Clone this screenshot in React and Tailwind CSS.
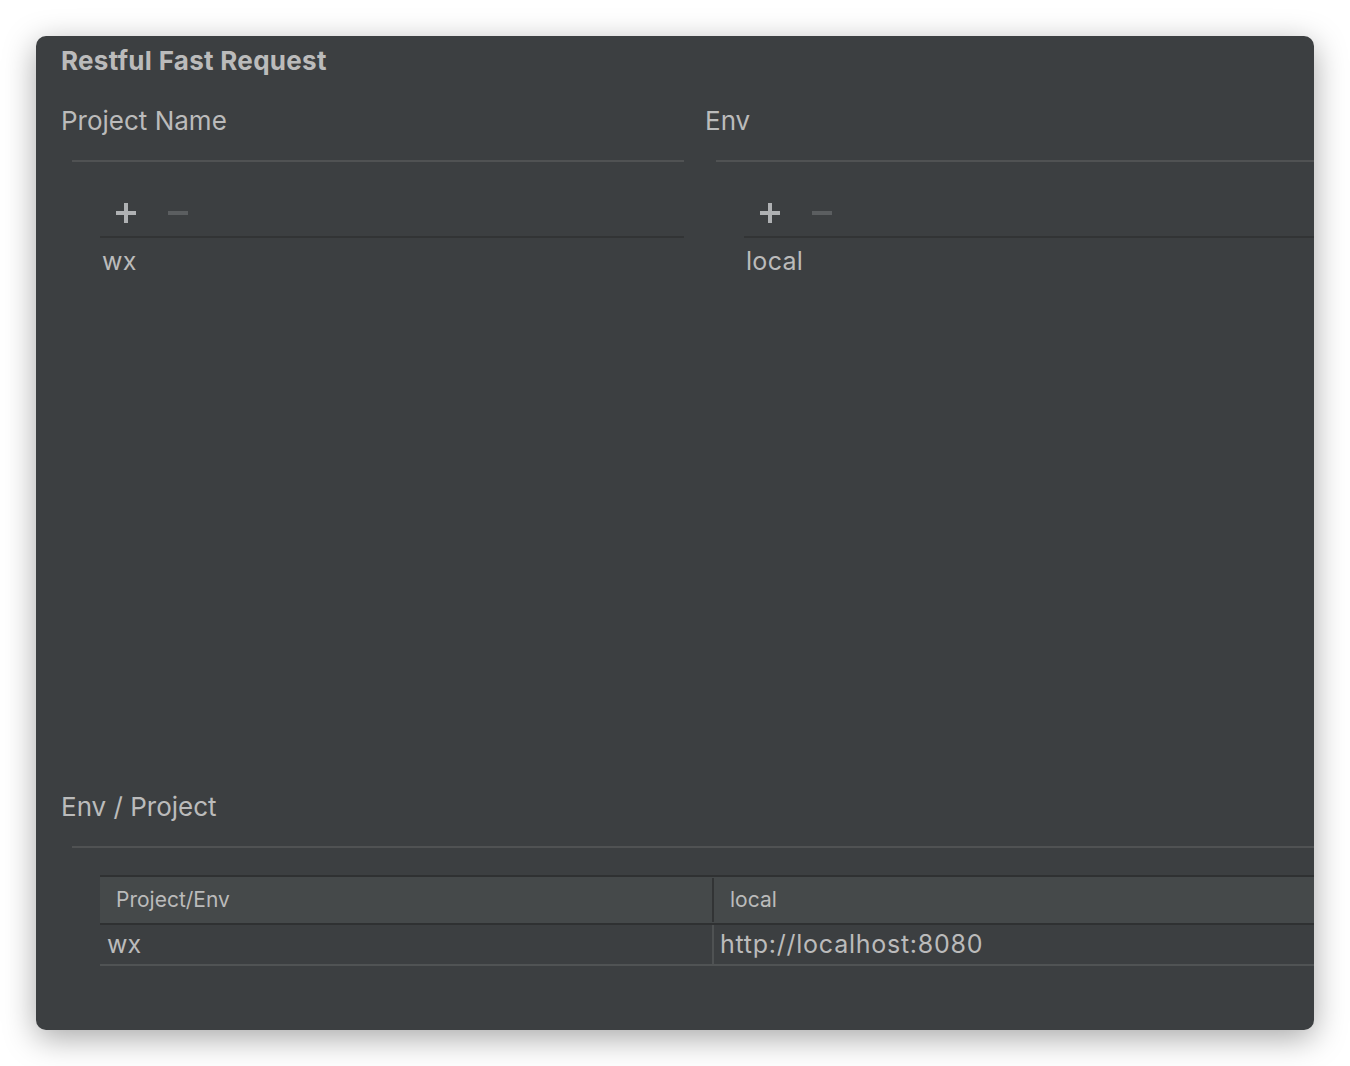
import React from 'react';

const PlusIcon = () => (
    <svg width="20" height="20" viewBox="0 0 20 20">
        <rect x="0" y="8" width="20" height="4" fill="#afb1b3" />
        <rect x="8" y="0" width="4" height="20" fill="#afb1b3" />
    </svg>
);

const MinusIcon = () => (
    <svg width="20" height="20" viewBox="0 0 20 20">
        <rect x="0" y="8" width="20" height="4" fill="#5b5e60" />
    </svg>
);

const ListPanel = ({ label, items }) => (
    <div className="flex flex-col min-w-0">
        <div className="leading-[32px] text-[26px] text-[#bbbbbb]">{label}</div>
        <div className="ml-[11px] mt-[23px] h-[2px] bg-[#505253]" />
        <div className="ml-[39px] mt-[28px] flex flex-col">
            <div className="h-[48px] flex items-center gap-[32px] pl-[16px] border-b-2 border-[#323435]">
                <PlusIcon />
                <MinusIcon />
            </div>
            {items.map((item) => (
                <div key={item} className="h-[48px] flex items-center pl-[2px] text-[25px] tracking-[0.3px] text-[#bbbbbb]">
                    {item}
                </div>
            ))}
        </div>
    </div>
);

export default function App() {
    return (
        <div className="h-[1066px] overflow-hidden bg-white pt-[36px] pl-[36px] font-['Inter','Noto_Sans',sans-serif]">
            <div className="w-[1278px] h-[994px] bg-[#3c3f41] rounded-[10px] overflow-hidden shadow-[0_8px_32px_rgba(0,0,0,0.35)] pl-[25px] pt-[9px] flex flex-col">
                <div className="leading-[32px] text-[26px] tracking-[0.3px] font-bold text-[#bbbbbb]">Restful Fast Request</div>

                {/* project / env lists */}
                <div className="mt-[28px] h-[686px] grid grid-cols-[623px_1fr] gap-x-[21px]">
                    <ListPanel label="Project Name" items={['wx']} />
                    <ListPanel label="Env" items={['local']} />
                </div>

                {/* env / project table */}
                <div className="flex flex-col">
                    <div className="leading-[32px] text-[26px] text-[#bbbbbb]">Env / Project</div>
                    <div className="ml-[11px] mt-[23px] h-[2px] bg-[#505253]" />
                    <div className="ml-[39px] mt-[27px] flex flex-col">
                        <div className="grid grid-cols-[612px_1fr] h-[50px] bg-[#45494a] border-t-2 border-b-2 border-[#2f3132] text-[21px] text-[#bbbbbb]">
                            <div className="flex items-center pl-[16px]">Project/Env</div>
                            <div className="flex items-center pl-[16px] border-l-2 border-[#323435] my-[1px]">local</div>
                        </div>
                        <div className="grid grid-cols-[612px_1fr] h-[41px] border-b-2 border-[#505354] text-[25px] text-[#bbbbbb]">
                            <div className="flex items-center pl-[7px]">wx</div>
                            <div className="flex items-center pl-[6px] border-l-2 border-[#4f5253] tracking-[0.75px]">http://localhost:8080</div>
                        </div>
                    </div>
                </div>
            </div>
        </div>
    );
}
